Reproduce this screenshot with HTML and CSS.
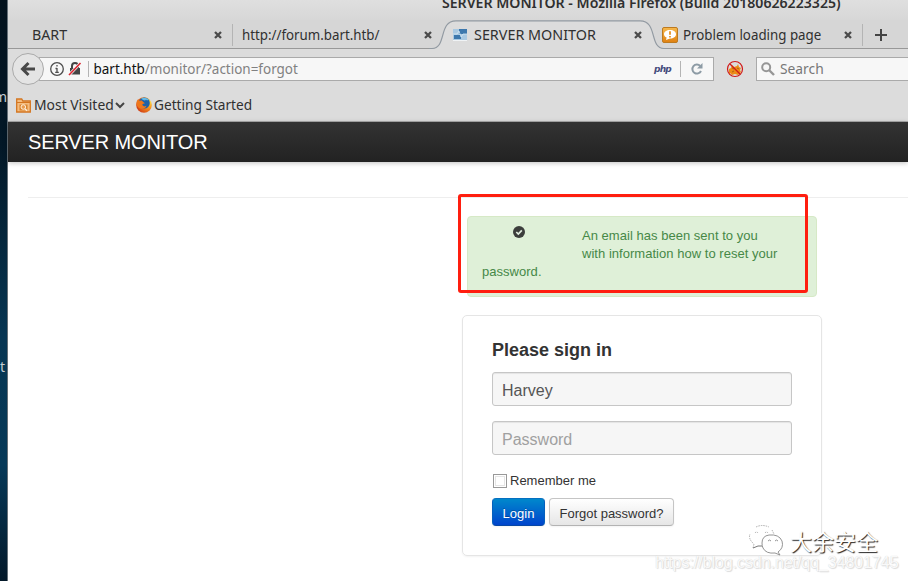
FILE: index.html
```html
<!DOCTYPE html>
<html lang="en">
<head>
<meta charset="utf-8">
<title>SERVER MONITOR</title>
<link rel="stylesheet" href="styles.css">
</head>
<body>
<div class="desktop">
  <aside class="wall"><span class="wall-m">m</span><span class="wall-t">t</span></aside>
  <div class="window">
    <header class="chrome">
      <div class="title"><span class="title-text">SERVER MONITOR - Mozilla Firefox (Build 20180626223325)</span></div>
      <div class="tabs">
        <div class="tab first"><span class="label t-bart">BART</span><svg class="x" viewBox="0 0 8 8"><path d="M1 1l6 6M7 1L1 7"/></svg></div>
        <div class="tab second"><span class="label t-forum">http://forum.bart.htb/</span><svg class="x" viewBox="0 0 8 8"><path d="M1 1l6 6M7 1L1 7"/></svg></div>
        <div class="tab active">
          <svg class="tab-shape" viewBox="0 0 238 30"><path class="fill" d="M0 30V28.5H3C18 28.5 9 .8 27 .8H211C229 .8 220 28.5 235 28.5H238V30Z"/><path class="edge" d="M0 28.5H3C18 28.5 9 .8 27 .8H211C229 .8 220 28.5 235 28.5H238"/></svg>
          <svg class="fav-mon" viewBox="0 0 14 12"><rect width="14" height="11" fill="#a9c9e2"/><path d="M6 0h8v5H6zM1 6h7v4H1z" fill="#3d78ad"/><path d="M0 5h4l2-3 2 6 2-3h4" stroke="#d5e7f3" stroke-width=".8" fill="none"/><path d="M0 11.5h14" stroke="#f0f3f5"/></svg>
          <span class="label t-server">SERVER MONITOR</span><svg class="x" viewBox="0 0 8 8"><path d="M1 1l6 6M7 1L1 7"/></svg>
        </div>
        <div class="tab problem">
          <svg class="fav-warn" viewBox="0 0 16 16"><defs><linearGradient id="o" x2="0" y2="1"><stop stop-color="#f6b94d"/><stop offset="1" stop-color="#df8010"/></linearGradient></defs><rect x=".5" y=".5" width="15" height="15" rx="1.5" fill="url(#o)" stroke="#bd7a20"/><path d="M8 3c3.600 0 6 1.700 6 4.200S11.600 11.500 8 11.500L4 13l.6-2.400C3 9.900 2 8.700 2 7.200 2 4.700 4.400 3 8 3z" fill="#fff"/><path d="M8 4.300v3.500M8 9v1.500" stroke="#e58b16" stroke-width="1.700"/></svg>
          <span class="label t-problem">Problem loading page</span><svg class="x" viewBox="0 0 8 8"><path d="M1 1l6 6M7 1L1 7"/></svg>
        </div>
        <svg class="plus" viewBox="0 0 12 12"><path d="M6 0v12M0 6h12"/></svg>
      </div>
      <div class="nav">
        <div class="back"><svg viewBox="0 0 14 14"><path d="M7.500 1L1.500 7l6 6M2 7h12"/></svg></div>
        <div class="urlbar">
          <svg class="info" viewBox="0 0 14 14"><circle cx="7" cy="7" r="6.300"/><path d="M7 6v4.500M5.500 6.500H7M5.200 10.300h3.600M7 3v1.500"/></svg>
          <svg class="lock" viewBox="0 0 14 14"><path d="M4 7V4a3 3 0 0 1 6 0v3" fill="none" stroke="#444" stroke-width="2"/><path d="M2 6h10v6.500H2z" fill="#444"/><path d="M1 13L12.500 1" stroke="#f7f7f7" stroke-width="3"/><path d="M1 13L12.500 1" stroke="#dc2530" stroke-width="1.600"/></svg>
          <i class="sep"></i>
          <span class="url"><b>bart.htb</b>/monitor/?action=forgot</span>
          <span class="php">php</span><i class="sep"></i>
          <svg class="reload" viewBox="0 0 12 12"><path d="M9.200 3A4.500 4.500 0 1 0 10 8" fill="none" stroke="#8d9ba5" stroke-width="2"/><path d="M11.500 0v5.500H6z" fill="#8d9ba5"/></svg>
        </div>
        <svg class="nofox" viewBox="0 0 18 18"><path d="M3 9l2-1 1-3 2 2 3-1 1-2 1 3 2 1-1 2 1 2-3 3-3-1-3 1-2-2-1 1z" fill="#ed8b15"/><path d="M6 8l2 1M11 8l2 1M6 12l2-1" stroke="#944d15" stroke-width=".7"/><circle cx="9" cy="9" r="7.500" fill="none" stroke="#d01919" stroke-width="1.200"/><path d="M4 4l10 10" stroke="#d01919" stroke-width="1.300"/></svg>
        <div class="search"><svg viewBox="0 0 14 14"><circle cx="5.200" cy="5.200" r="4" fill="none" stroke="#969696" stroke-width="2"/><path d="M8 8l5 5" stroke="#969696" stroke-width="2.400"/></svg><span class="t-search">Search</span></div>
      </div>
      <div class="bookmarks">
        <svg class="folder" viewBox="0 0 15 15"><path d="M.7 14V1h5l1.200 2h7.400v11z" fill="#f4bd80" stroke="#d47620" stroke-width="1.300"/><path d="M1 4.500h13" stroke="#d47620"/><path d="M3.500 6.500h8v6h-8z" fill="#d9832d"/><circle cx="7.300" cy="9" r="2.300" fill="#e99d50" stroke="#fff1df"/><path d="M9 10.800l2 2" stroke="#fff1df" stroke-width="1.400"/></svg>
        <span class="t-most">Most Visited</span>
        <svg class="chev" viewBox="0 0 10 6"><path d="M1 1l4 4 4-4"/></svg>
        <svg class="firefox" viewBox="0 0 16 16"><defs><radialGradient id="f" cx=".85" cy=".3" r=".9"><stop stop-color="#ffe14a"/><stop offset=".4" stop-color="#f9941d"/><stop offset="1" stop-color="#cf3d16"/></radialGradient></defs><circle cx="8" cy="8" r="7.800" fill="url(#f)"/><circle cx="8.300" cy="6" r="5.500" fill="#1f62a8"/><path d="M5 1.800q4-2.500 8 1-2 1-3 0-1 2-5-1z" fill="#64b9e7"/><path d="M.4 7Q0 4 2 2.200l1.200 1.500 2.600-.2L7.200 5 9 6.300l-2.500.8q-.5 2 2 2.300l2-.6q-1 3-4.500 3Q1.500 11.500.4 7z" fill="#ee771b"/></svg>
        <span class="t-getting">Getting Started</span>
      </div>
    </header>
    <main class="page">
      <div class="navbar">SERVER MONITOR</div>
      <hr class="rule">
      <div class="content">
        <div class="alert">
          <div class="alert-icon"><svg viewBox="0 0 12 12"><circle cx="6" cy="6" r="6" fill="#3c3e3c"/><path d="M3.300 6l2 2 3.500-3.700" fill="none" stroke="#e2eee0" stroke-width="1.700"/></svg></div>
          An email has been sent to you with information how to reset your password.
          <div class="annotation"></div>
        </div>
        <form class="signin">
          <h3>Please sign in</h3>
          <div class="field">Harvey</div>
          <div class="field placeholder">Password</div>
          <div class="remember"><i class="checkbox"></i><span>Remember me</span></div>
          <div class="actions"><div class="btn primary">Login</div><div class="btn">Forgot password?</div></div>
        </form>
      </div>
    </main>
  </div>
  <div class="brand">
    <svg viewBox="0 0 36 32"><path class="dots" d="M5 23l1-4Q0 14 2 9M8 2Q14-1 21 2M24 5l2 4M7 8q1.500-2 3 0M17 8q1.500-2 3 0"/><path class="shade" d="M5 23l5-2 4 0"/><path class="line" d="M14 18Q14 11 21 10q10-1 13 6 2 7-4 11l2 3-5-2q-9 1-12-5-1-2-1-5M20 16q1.500-2 3 0M27 16q1.500-2 3 0"/></svg>
    <span>大余安全</span>
  </div>
  <div class="source">https://blog.csdn.net/qq_34801745</div>
</div>
</body>
</html>
```
FILE: styles.css
```css
* { box-sizing: border-box; }
body { margin: 0; background: #fff; font-family: "Liberation Sans", Arial, sans-serif; }
svg { display: block; flex: none; overflow: visible; }
.desktop { position: relative; display: flex; width: 908px; height: 581px; overflow: hidden; }
.wall { display: flex; flex-direction: column; align-items: flex-end; flex: none; width: 8px; overflow: hidden; background: linear-gradient(#03121d, #031827 25%, #073653 58%, #063958 80%, #04192a); border-right: 1px solid #657078; color: #c3ccd2; font: 14px/18px "Noto Sans", sans-serif; }
.wall-m { margin-top: 88px; }
.wall-t { margin-top: 252px; margin-right: 2px; }
.window { flex: 1; min-width: 0; background: #fff; }
.chrome { height: 122px; background: #dcdcdc; border-bottom: 1px solid #aaa; color: #303030; font: 15px/20px "Noto Sans", sans-serif; overflow: hidden; white-space: nowrap; }
.title { display: flex; align-items: flex-end; height: 20px; padding: 0 0 8px 434px; background: linear-gradient(#dfdfdf, #d7d7d7); font-weight: 600; }
.title-text { transform: scaleX(.94); }
.title-text, .label, .url, .t-search, .t-most, .t-getting { transform-origin: 0 50%; }
.label, .url, .t-search, .t-most, .t-getting { padding-bottom: 2px; }
.t-bart { transform: scaleX(.95); }
.t-forum { transform: scaleX(.887); }
.t-server { transform: scaleX(.957); }
.t-problem { transform: scaleX(.888); }
.tabs { display: flex; height: 29px; background: #d6d6d6; border-bottom: 1px solid #989898; }
.tab { position: relative; display: flex; align-items: center; flex: none; height: 29px; padding-right: 10px; }
.tab .label { position: relative; flex: 1; min-width: 0; }
.first { width: 225px; padding-left: 24px; padding-right: 11px; }
.second { width: 209px; padding-left: 9px; }
.active { width: 210px; padding-left: 11px; }
.problem { width: 211px; padding-left: 10px; padding-right: 11px; }
.first::after, .problem::after { content: ""; position: absolute; right: 0; top: 4px; width: 1px; height: 22px; background: #b4b4b4; }
.x { position: relative; width: 8px; height: 8px; fill: none; stroke: #4b4b4b; stroke-width: 2.3; }
.tab-shape { position: absolute; left: -13px; top: 0; width: 238px; height: 30px; }
.tab-shape .fill { fill: #dcdcdc; }
.tab-shape .edge { fill: none; stroke: #929aa2; stroke-width: 1.2; }
.fav-mon { position: relative; width: 14px; height: 12px; margin-right: 7px; }
.fav-warn { position: relative; width: 16px; height: 16px; margin-right: 5px; }
.plus { width: 12px; height: 12px; margin: 9px 0 0 12px; stroke: #444; stroke-width: 2; }
.nav { display: flex; align-items: center; height: 40px; padding-left: 4px; }
.back { position: relative; z-index: 1; display: flex; align-items: center; justify-content: center; width: 32px; height: 32px; border: 1px solid #aaa; border-radius: 50%; background: #e4e4e4; }
.back svg { width: 14px; height: 14px; fill: none; stroke: #484848; stroke-width: 3; }
.urlbar { display: flex; align-items: center; width: 675px; height: 24px; margin-left: -5px; padding: 0 10px; background: #f7f7f7; border: 1px solid #aaa; }
.info { width: 14px; height: 14px; fill: none; stroke: #4d4d4d; stroke-width: 1.3; }
.lock { width: 14px; height: 14px; margin: 0 6px 0 4px; }
.sep { flex: none; width: 1px; height: 16px; background: #b4b4b4; }
.url { flex: 1; padding-left: 5px; color: #818181; transform: scaleX(.898); }
.url b { color: #111; font-weight: 400; }
.php { margin-right: 9px; color: #454b7c; font: italic bold 9px/16px "DejaVu Sans", sans-serif; letter-spacing: -.8px; }
.reload { width: 12px; height: 12px; margin-left: 10px; }
.nofox { width: 18px; height: 18px; margin: 0 12px; }
.search { display: flex; align-items: center; flex: 1; height: 24px; padding-left: 4px; border: 1px solid #aaa; border-right: 0; background: #f7f7f7; color: #777; }
.search svg { width: 14px; height: 14px; margin-right: 5px; }
.t-search { transform: scaleX(.92); }
.bookmarks { display: flex; align-items: center; height: 32px; padding-left: 8px; }
.folder { width: 15px; height: 15px; }
.t-most { width: 80px; margin-left: 3px; transform: scaleX(.925); }
.t-getting { transform: scaleX(.91); }
.chev { width: 10px; height: 6px; fill: none; stroke: #444; stroke-width: 2; margin-left: 1px; }
.firefox { width: 16px; height: 16px; margin: 0 2px 0 11px; }
.navbar { height: 40px; padding-left: 20px; background: linear-gradient(#333, #222); box-shadow: 0 1px 5px rgba(0,0,0,.25); color: #fff; font-size: 20px; line-height: 40px; letter-spacing: -.14px; }
.rule { height: 1px; margin: 35px 0 18px 20px; border: 0; background: #eee; }
.content { width: 360px; margin-left: 454px; }
.alert { position: relative; width: 350px; height: 81px; margin: 0 5px 18px; padding: 10px 34px 8px 14px; background: #dff0d8; border: 1px solid #d6e9c6; border-radius: 4px; color: #468847; font-size: 13px; line-height: 18px; letter-spacing: .03px; }
.alert-icon { float: left; width: 100px; height: 30px; padding-left: 31px; }
.alert-icon svg { width: 12px; height: 12px; margin-top: -1px; }
.annotation { position: absolute; left: -10px; top: -23px; width: 350px; height: 99px; border: 3px solid #ff1e0f; border-radius: 3px; }
.signin { height: 241px; padding: 24px 29px; border: 1px solid #e5e5e5; border-radius: 5px; box-shadow: 0 1px 2px rgba(0,0,0,.05); color: #333; font-size: 13px; }
h3 { margin: 0 0 12px; font-size: 18px; line-height: 20px; }
.field { height: 34px; margin-bottom: 15px; padding: 1px 9px 0; border: 1px solid #c6c6c6; border-radius: 3px; background: #f6f6f6; box-shadow: inset 0 1px 1px rgba(0,0,0,.075); color: #555; font-size: 16px; line-height: 33px; }
.placeholder { color: #a0a0a0; }
.remember { display: flex; align-items: center; height: 18px; margin: 17px 0 8px 1px; }
.remember span { padding-bottom: 2px; }
.checkbox { width: 14px; height: 14px; margin-right: 3px; border: 1px solid #999; background: #fff; box-shadow: inset 0 0 0 1px #fff, inset 0 0 0 2px #e5e5e5; }
.actions { display: flex; gap: 4px; }
.btn { width: 125px; height: 28px; border: 1px solid #c5c5c5; border-bottom-color: #b3b3b3; border-radius: 4px; background: linear-gradient(#fff, #e6e6e6); box-shadow: 0 1px 2px rgba(0,0,0,.05); text-align: center; line-height: 29px; }
.primary { width: 53px; border-color: #0570c0 #0560bd #0747a5; background: linear-gradient(#08c, #04c); color: #fff; text-shadow: 0 -1px 0 rgba(0,0,0,.25); }
.brand { position: absolute; left: 748px; top: 522px; display: flex; align-items: center; color: #fff; font: 22px/34px "Noto Sans CJK SC", sans-serif; text-shadow: 1px 1px 1px #222; }
.brand svg { width: 36px; height: 32px; margin: 3px 6px 0 0; fill: none; }
.dots { stroke: #999; stroke-width: .8; stroke-dasharray: 1.5 1; }
.shade { stroke: #777; stroke-width: 1; }
.line { fill: #fff; stroke: #888; stroke-width: .9; }
.source { position: absolute; left: 655px; top: 553px; color: rgba(255,255,255,.9); font-size: 16px; line-height: 20px; letter-spacing: -.06px; text-shadow: 0 0 1px #ccc, 1px 1px 1px #ddd; }
```
